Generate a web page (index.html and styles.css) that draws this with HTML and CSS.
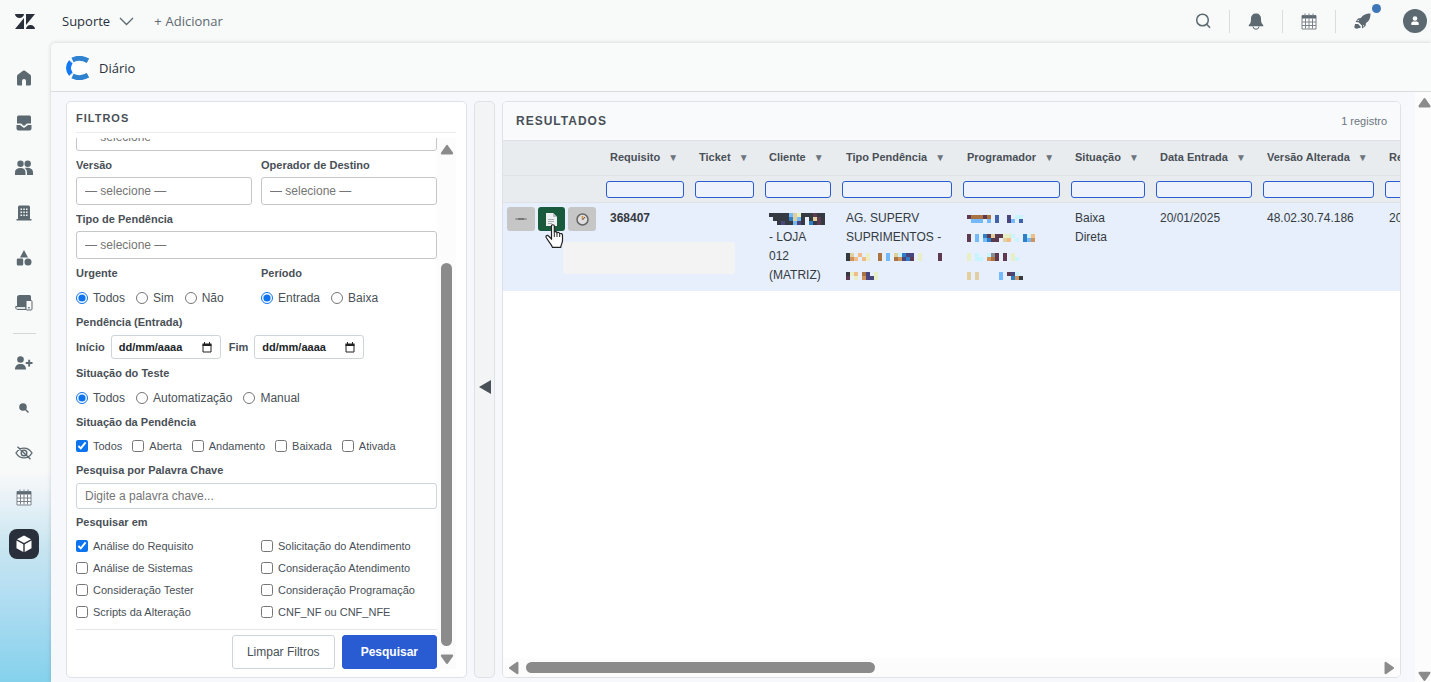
FILE: index.html
```html
<!DOCTYPE html>
<html lang="pt-BR">
  <head>
    <meta charset="UTF-8" />
    <title>Diário</title>
    <link rel="stylesheet" href="styles.css">
  </head>
  <body>
    <svg class="defs" width="0" height="0" aria-hidden="true">
      <symbol id="calendar" viewBox="0 0 16 16">
        <path d="M1 2h14v13.5H1z" fill="#fff" stroke="#7b828b" />
        <path d="M1 2h14v3H1z" fill="#5c6970" />
        <path d="M4 0v3M8 0v3M12 0v3" stroke="#7b828b" />
        <path d="M1 8.5h14M1 12h14M4.5 5v10M8 5v10M11.5 5v10" stroke="#7b828b" />
      </symbol>
      <symbol id="date" viewBox="0 0 10 11">
        <path d="M1 2.5h8v7.500H1z" fill="none" stroke="#222" />
        <path d="M.5 1.500h9V4h-9zM2 0h1v2H2zM7 0h1v2H7z" fill="#222" />
      </symbol>
    </svg>

    <header class="topbar">
      <a class="logo" href="#" aria-label="Início">
        <svg width="20" height="15" viewBox="0 0 20 15" fill="#2a303b">
          <path d="M0 0h9a4.500 4 0 0 1-9 0zM9 4v11H0zM11 0h9l-9 11zM11 15a4.500 4 0 0 1 9 0z" />
        </svg>
      </a>
      <button class="product">
        Suporte
        <svg width="15" height="9" viewBox="0 0 15 9" fill="none" stroke="#5c6970" stroke-width="1.300">
          <path d="M1 1l6.500 6.500L14 1" />
        </svg>
      </button>
      <button class="add"><span>+</span> Adicionar</button>

      <div class="tools">
        <button aria-label="Pesquisar no site">
          <svg width="16" height="16" viewBox="0 0 16 16" fill="none" stroke="#5c6970" stroke-width="1.500">
            <circle cx="7.500" cy="7" r="5.800" />
            <path d="M11.700 11.200l3.300 3.500" />
          </svg>
        </button>
        <button aria-label="Notificações">
          <svg width="16" height="17" viewBox="0 0 16 17" fill="#5c6970">
            <path d="M8 .5c3 0 5 2 5 5.300 0 3 .3 4.700 2.200 6.200v1.200H.8V12C2.700 10.500 3 8.800 3 5.800 3 2.500 5 .5 8 .5z" />
            <path d="M5 13.500a3 2.700 0 0 0 6 0" fill="none" stroke="#5c6970" />
          </svg>
        </button>
        <button aria-label="Calendário">
          <svg width="16" height="17"><use href="#calendar" /></svg>
        </button>
        <button class="rocket" aria-label="Novidades">
          <svg width="17" height="17" viewBox="0 0 17 17" fill="#5c6970">
            <path d="M16.500.5c-5 0-7.500 1.500-9.600 4.500L4 5.500 1.500 9l3 .2 3.400 3.400.2 3 3.400-2.500.5-3c3-2.100 4.500-4.600 4.500-9.600z" />
            <circle cx="2.800" cy="13.500" r="2.300" />
            <path d="M4 11l3 3-1 1H.5v1.500L1 11z" />
            <path d="M4.200 6.800L3.300 8h2zM9 13.700v-2l1.200 1z" fill="#f8f9f9" />
          </svg>
          <span class="dot"></span>
        </button>
        <button class="avatar" aria-label="Perfil">
          <svg width="24" height="24" viewBox="0 0 24 24">
            <circle cx="12" cy="12" r="12" fill="#5c6970" />
            <circle cx="12" cy="9.500" r="2.300" fill="#fff" />
            <path d="M8.300 16v-1.500a2 2 0 0 1 2-2h3.400a2 2 0 0 1 2 2V16z" fill="#fff" />
          </svg>
        </button>
      </div>
    </header>

    <div class="shell">
      <nav class="sidebar">
        <a href="#" aria-label="Home">
          <svg width="16" height="16" viewBox="0 0 16 16"><path d="M7 .7a2 2 0 0 1 2 0l5.300 4.100c.5.400.7.800.7 1.400V14a1.500 1.500 0 0 1-1.500 1.500H10V11a2 2 0 0 0-4 0v4.500H2.500A1.500 1.500 0 0 1 1 14V6.200c0-.6.2-1 .7-1.400z" /></svg>
        </a>
        <a href="#" aria-label="Visualizações">
          <svg width="16" height="16" viewBox="0 0 16 16"><path d="M2.500.5h11A1.500 1.500 0 0 1 15 2v6.500h-4L8 11 5 8.500H1V2A1.500 1.500 0 0 1 2.500.5zM.5 10H4l4 3 4-3h3.500v3.500a2 2 0 0 1-2 2h-11a2 2 0 0 1-2-2z" /></svg>
        </a>
        <a href="#" aria-label="Clientes">
          <svg width="18" height="16" viewBox="0 0 18 16"><circle cx="5.500" cy="3.700" r="3.200" /><circle cx="12.700" cy="3.700" r="3.200" /><path d="M0 15v-2.500C0 9.500 2 8 5.500 8s5 1.500 5 4.500V15zM9.500 8c5-.8 8.500.7 8.500 4.500V15h-6v-2.500c0-2-.8-3.500-2.500-4.500z" /></svg>
        </a>
        <a href="#" aria-label="Organizações">
          <svg width="16" height="16" viewBox="0 0 16 16"><path d="M3.500.5h9A1.500 1.500 0 0 1 14 2v12h1.500v1.500H.5V14H2V2A1.500 1.500 0 0 1 3.500.5z" /><path d="M4.500 3.500H6V5H4.500zM7.300 3.500h1.500V5H7.300zM10 3.500h1.500V5H10zM4.500 6.500H6V8H4.500zM7.300 6.500h1.500V8H7.300zM10 6.500h1.500V8H10zM4.500 9.500H6V11H4.500zM7.300 9.500h1.500V11H7.300zM10 9.500h1.500V11H10z" fill="#f8f9f9" /></svg>
        </a>
        <a href="#" aria-label="Objetos">
          <svg width="16" height="16" viewBox="0 0 16 16"><path d="M8 0l4 7.500H4zM2 8.500h4A1.200 1.200 0 0 1 7.200 9.700v4.600A1.200 1.200 0 0 1 6 15.500H2a1.200 1.200 0 0 1-1.200-1.200V9.700A1.200 1.200 0 0 1 2 8.500z" /><circle cx="12" cy="12" r="3.500" /></svg>
        </a>
        <a href="#" aria-label="Dispositivos">
          <svg width="18" height="16" viewBox="0 0 18 16"><path d="M4.500 0h10A1.500 1.500 0 0 1 16 1.500V13H2V2.500A2.500 2.500 0 0 1 4.500 0z" /><path d="M.7 11.500H11v3H2.500c-1.200 0-1.800-1-1.800-3z" fill="#dfe4e7" stroke="#5c6970" /><rect x="11" y="5.500" width="6" height="9.500" rx="1" fill="#f8f9f9" stroke="#5c6970" /><path d="M13.200 12h1.500v1.500h-1.500z" /></svg>
        </a>
        <hr />
        <a href="#" aria-label="Adicionar usuário">
          <svg width="18" height="14" viewBox="0 0 18 14"><circle cx="5.500" cy="3.500" r="3.300" /><path d="M0 13.500C0 10 2 8 5.500 8S11 10 11 13.500zM13.200 3.700h1.900v2.400h2.400V8h-2.400v2.400h-1.900V8h-2.400V6.100h2.400z" /></svg>
        </a>
        <a href="#" aria-label="Buscar">
          <svg width="10" height="10" viewBox="0 0 10 10"><circle cx="4" cy="4" r="3.800" /><path d="M6 6l3.500 3.500" stroke="#5c6970" stroke-width="1.500" /></svg>
        </a>
        <a href="#" aria-label="Ocultar">
          <svg width="18" height="14" viewBox="0 0 18 14" fill="none" stroke="#5c6970" stroke-width="1.400"><path d="M1 7c4-6.500 12-6.500 16 0-4 6.500-12 6.500-16 0zM2.500.7l13 12.600" /><circle cx="9" cy="7" r="2.800" /></svg>
        </a>
        <a href="#" aria-label="Agenda">
          <svg width="16" height="17"><use href="#calendar" /></svg>
        </a>
        <a class="active" href="#" aria-label="Diário">
          <svg width="16" height="18" viewBox="0 0 16 18"><path d="M8 .5l7 3.700-7 3.800-7-3.800zM.5 5.500L7.300 9.200V17L.5 13.300zM15.500 5.500L8.700 9.200V17l6.800-3.700z" fill="#fff" /></svg>
        </a>
      </nav>

      <main class="app">
        <div class="app-header">
          <svg width="24" height="24" viewBox="0 0 24 24" fill="none" stroke-width="5">
            <rect width="24" height="24" fill="#fff" />
            <path d="M6.500 4C11 1.700 17 2 22 4.700" stroke="#2f82cf" />
            <path d="M5 5.500c-3.300 4-3.300 9 0 13" stroke="#1278f3" />
            <path d="M6.500 20c4.500 2.300 10.500 2 15.500-.7" stroke="#2f82cf" />
            <path d="M3.500 4l4 4M3.500 20l4-4" stroke="#fff" stroke-width=".8" />
          </svg>
          <h1>Diário</h1>
        </div>

        <div class="workspace">
          <div class="panels">
            <form class="filters">
              <h2>FILTROS</h2>
              <div class="filters-body">
                <div class="fields">
                  <div class="field pick">
                    <select aria-label="Sistema"><option>— selecione —</option></select>
                  </div>
                  <div class="row">
                    <div class="field pick">
                      <label for="versao">Versão</label>
                      <select id="versao"><option>— selecione —</option></select>
                    </div>
                    <div class="field pick">
                      <label for="operador">Operador de Destino</label>
                      <select id="operador"><option>— selecione —</option></select>
                    </div>
                  </div>
                  <div class="field pick">
                    <label for="tipo">Tipo de Pendência</label>
                    <select id="tipo"><option>— selecione —</option></select>
                  </div>
                  <div class="row">
                    <fieldset class="field">
                      <legend>Urgente</legend>
                      <div class="radios">
                        <label><input type="radio" name="urgente" checked />Todos</label>
                        <label><input type="radio" name="urgente" />Sim</label>
                        <label><input type="radio" name="urgente" />Não</label>
                      </div>
                    </fieldset>
                    <fieldset class="field">
                      <legend>Período</legend>
                      <div class="radios">
                        <label><input type="radio" name="periodo" checked />Entrada</label>
                        <label><input type="radio" name="periodo" />Baixa</label>
                      </div>
                    </fieldset>
                  </div>
                  <fieldset class="field">
                    <legend>Pendência (Entrada)</legend>
                    <div class="dates">
                      <label for="inicio">Início</label>
                      <span class="date-box">
                        <input id="inicio" type="text" placeholder="dd/mm/aaaa" />
                        <svg width="10" height="11"><use href="#date" /></svg>
                      </span>
                      <label for="fim">Fim</label>
                      <span class="date-box">
                        <input id="fim" type="text" placeholder="dd/mm/aaaa" />
                        <svg width="10" height="11"><use href="#date" /></svg>
                      </span>
                    </div>
                  </fieldset>
                  <fieldset class="field">
                    <legend>Situação do Teste</legend>
                    <div class="radios">
                      <label><input type="radio" name="teste" checked />Todos</label>
                      <label><input type="radio" name="teste" />Automatização</label>
                      <label><input type="radio" name="teste" />Manual</label>
                    </div>
                  </fieldset>
                  <fieldset class="field">
                    <legend>Situação da Pendência</legend>
                    <div class="checks">
                      <label><input type="checkbox" checked />Todos</label>
                      <label><input type="checkbox" />Aberta</label>
                      <label><input type="checkbox" />Andamento</label>
                      <label><input type="checkbox" />Baixada</label>
                      <label><input type="checkbox" />Ativada</label>
                    </div>
                  </fieldset>
                  <div class="field">
                    <label for="palavra">Pesquisa por Palavra Chave</label>
                    <input class="text" id="palavra" type="text" placeholder="Digite a palavra chave..." />
                  </div>
                  <fieldset class="field">
                    <legend>Pesquisar em</legend>
                    <div class="check-grid">
                      <label><input type="checkbox" checked />Análise do Requisito</label>
                      <label><input type="checkbox" />Solicitação do Atendimento</label>
                      <label><input type="checkbox" />Análise de Sistemas</label>
                      <label><input type="checkbox" />Consideração Atendimento</label>
                      <label><input type="checkbox" />Consideração Tester</label>
                      <label><input type="checkbox" />Consideração Programação</label>
                      <label><input type="checkbox" />Scripts da Alteração</label>
                      <label><input type="checkbox" />CNF_NF ou CNF_NFE</label>
                    </div>
                  </fieldset>
                  <div class="actions">
                    <button type="reset" class="btn">Limpar Filtros</button>
                    <button type="button" class="btn primary">Pesquisar</button>
                  </div>
                </div>
                <div class="vscroll">
                  <svg width="14" height="11" viewBox="0 0 12 10"><path d="M5 1.500a1.200 1.200 0 0 1 2 0L11.500 8q.5 1.500-1 1.500h-9Q0 9.500.5 8z" /></svg>
                  <div class="rail"><div class="thumb"></div></div>
                  <svg width="14" height="11" viewBox="0 0 12 10"><path d="M5 8.500a1.200 1.200 0 0 0 2 0L11.500 2q.5-1.500-1-1.500h-9Q0 .5.5 2z" /></svg>
                </div>
              </div>
            </form>

            <button class="collapse" aria-label="Recolher filtros">
              <svg width="12" height="14" viewBox="0 0 12 14"><path d="M0 7l12-7v14z" fill="#495057" /></svg>
            </button>

            <section class="results">
              <div class="results-header">
                <h2>RESULTADOS</h2>
                <span>1 registro</span>
              </div>
              <div class="table-wrap">
                <table>
                  <colgroup>
                    <col class="c-actions" /><col class="c-requisito" /><col class="c-ticket" />
                    <col class="c-cliente" /><col class="c-tipo" /><col class="c-programador" />
                    <col class="c-situacao" /><col class="c-data" /><col class="c-versao" /><col class="c-release" />
                  </colgroup>
                  <thead>
                    <tr>
                      <th></th>
                      <th>Requisito <i>▼</i></th>
                      <th>Ticket <i>▼</i></th>
                      <th>Cliente <i>▼</i></th>
                      <th>Tipo Pendência <i>▼</i></th>
                      <th>Programador <i>▼</i></th>
                      <th>Situação <i>▼</i></th>
                      <th>Data Entrada <i>▼</i></th>
                      <th>Versão Alterada <i>▼</i></th>
                      <th>Release</th>
                    </tr>
                    <tr class="search">
                      <td></td>
                      <td><input type="text" aria-label="Requisito" /></td>
                      <td><input type="text" aria-label="Ticket" /></td>
                      <td><input type="text" aria-label="Cliente" /></td>
                      <td><input type="text" aria-label="Tipo Pendência" /></td>
                      <td><input type="text" aria-label="Programador" /></td>
                      <td><input type="text" aria-label="Situação" /></td>
                      <td><input type="text" aria-label="Data Entrada" /></td>
                      <td><input type="text" aria-label="Versão Alterada" /></td>
                      <td><input type="text" aria-label="Release" /></td>
                    </tr>
                  </thead>
                  <tbody>
                    <tr>
                      <td class="row-actions">
                        <div class="icon-buttons">
                          <button aria-label="Recolher">
                            <svg width="12" height="4" viewBox="0 0 12 4"><rect y="1" width="12" height="2" rx="1" fill="#999" /><rect x="3" y="1" width="6" height="2" fill="#777" /></svg>
                          </button>
                          <button class="on" aria-label="Documento">
                            <svg width="11" height="13" viewBox="0 0 11 13"><path d="M0 0h7l4 4v9H0z" fill="#eceef0" /><path d="M7 0v4h4z" fill="#b9bec2" /><path d="M2 6.500h6M2 8.500h6M2 10.500h4" stroke="#a9aeb3" /></svg>
                          </button>
                          <button aria-label="Tempo">
                            <svg width="13" height="13" viewBox="0 0 13 13"><circle cx="6.500" cy="6.500" r="5.500" fill="#dedede" stroke="#666" stroke-width="1.500" /><path d="M6.500 6.500V3" stroke="#e58a2b" stroke-width="1.500" /><path d="M6.500 7l2.500-3" stroke="#555" /></svg>
                          </button>
                        </div>
                        <div class="tooltip"></div>
                        <svg class="cursor" width="19" height="25" viewBox="0 0 19 25">
                          <path d="M6.500 2c0-1.700 2.800-1.700 2.800 0v6.500c.6-1.300 2.600-1 2.700.5.800-1 2.600-.6 2.700.9.900-.8 2.800-.4 2.800 1.500v5c0 3-1.500 4-1.800 7H7.500C6.500 20 3 17 1.200 13.500c-.8-1.700 1.200-2.900 2.400-1.500l2.900 3z" fill="#fff" stroke="#222" stroke-width="1.200" />
                          <path d="M9.300 8.500V13M12 9.500V13M14.700 10.500V13" stroke="#222" />
                        </svg>
                      </td>
                      <td><b>368407</b></td>
                      <td></td>
                      <td><span class="mosaic" data-rows="kkkkkbtykkkmkk .kkkkutbk.ktmk ..knkkbnk.ukmk"></span> - LOJA 012 (MATRIZ)</td>
                      <td>
                        AG. SUPERV SUPRIMENTOS -
                        <span class="mosaic" data-rows="kt.s.y..o.b.tcunn.y....m kws.sy..o.b.ownum.y....m"></span>
                        <span class="mosaic" data-rows="kys.on.y m.y.wnny"></span>
                      </td>
                      <td>
                        <span class="mosaic" data-rows="mooomo.a..n.cc .bbb.b.a..nb.a"></span>
                        <span class="mosaic" data-rows="m.b.umtmmyyc..ucs m.b.bumm.ts.c.ubw"></span>
                        <span class="mosaic" data-rows="y.c..cgm.m.y. y.cc.wom.m.yc"></span>
                        <span class="mosaic" data-rows="t.t.....b.mnc. t.t.....b..uwk"></span>
                      </td>
                      <td>Baixa Direta</td>
                      <td>20/01/2025</td>
                      <td>48.02.30.74.186</td>
                      <td>20/01/2025</td>
                    </tr>
                  </tbody>
                </table>
              </div>
              <div class="hscroll">
                <svg width="11" height="14" viewBox="0 0 10 12"><path d="M1.500 5a1.200 1.200 0 0 0 0 2L8 11.500q1.500.5 1.500-1v-9q0-1.500-1.500-1z" /></svg>
                <div class="rail"><div class="thumb"></div></div>
                <svg width="11" height="14" viewBox="0 0 10 12"><path d="M8.500 5a1.200 1.200 0 0 1 0 2L2 11.500q-1.500.5-1.500-1v-9q0-1.500 1.500-1z" /></svg>
              </div>
            </section>
          </div>
          <div class="page-scroll">
            <svg width="13" height="11" viewBox="0 0 12 10"><path d="M5 1.500a1.200 1.200 0 0 1 2 0L11.500 8q.5 1.500-1 1.500h-9Q0 9.500.5 8z" /></svg>
            <svg width="13" height="11" viewBox="0 0 12 10"><path d="M5 8.500a1.200 1.200 0 0 0 2 0L11.500 2q.5-1.500-1-1.500h-9Q0 .5.5 2z" /></svg>
          </div>
        </div>
      </main>
    </div>

    <script>
      const palette = {
        k: "#353a42", m: "#5e3a4e", b: "#74bafa", u: "#2f7fc8", n: "#48457f",
        o: "#a97442", y: "#e8efc4", t: "#e2cfa0", c: "#c8f4ff", s: "#f0bd88",
        g: "#8a8d92", a: "#3f63a8", w: "#d0955c",
      };

      // each letter becomes one square, hidden names are drawn as blocks
      document.querySelectorAll(".mosaic").forEach((el) => {
        const rows = el.dataset.rows.split(" ");
        let rects = "";
        rows.forEach((row, y) => {
          [...row].forEach((key, x) => {
            if (palette[key]) {
              rects += `<rect x="${x * 4}" y="${y * 4}" width="4" height="4" fill="${palette[key]}" />`;
            }
          });
        });
        el.innerHTML = `<svg width="${rows[0].length * 4}" height="${rows.length * 4}">${rects}</svg>`;
      });
    </script>
  </body>
</html>
```
FILE: styles.css
```css
* {
  box-sizing: border-box;
}

body {
  margin: 0;
  height: 100vh;
  display: flex;
  flex-direction: column;
  overflow: hidden;
  background: #f8f9f9;
  color: #343a40;
  font-family: "Liberation Sans", Arial, sans-serif;
  font-size: 12px;
}

button,
input,
select {
  font: inherit;
  color: inherit;
}

button {
  cursor: pointer;
}

svg {
  display: block;
  flex: none;
}

.defs {
  position: absolute;
}

h1,
h2 {
  margin: 0;
}

/* top bar */
.topbar {
  height: 43px;
  flex: none;
  display: flex;
  align-items: center;
  padding-bottom: 1px;
  font-family: "Open Sans", sans-serif;
  font-size: 13px;
}

.topbar button {
  display: flex;
  align-items: center;
  padding: 0;
  border: 0;
  background: none;
}

.logo {
  padding: 0 27px 0 15px;
}

.topbar .product {
  gap: 9px;
  margin-right: 20px;
  color: #2a303b;
  font-weight: 500;
}

.topbar .add {
  gap: 4px;
  color: #5c6970;
}

.tools {
  display: flex;
  align-items: center;
  margin-left: auto;
}

.tools button {
  justify-content: center;
  width: 53px;
  height: 23px;
  border-left: 1px solid #d8dcde;
}

.tools button:first-child,
.tools .avatar {
  border-left: 0;
}

.tools .rocket {
  position: relative;
}

.tools .avatar {
  justify-content: flex-end;
  width: 43px;
  padding-right: 4px;
}

.dot {
  position: absolute;
  top: -6px;
  right: 7px;
  width: 9px;
  height: 9px;
  border-radius: 50%;
  background: #3f76b8;
}

.shell {
  flex: 1;
  min-height: 0;
  display: flex;
}

/* side navigation */
.sidebar {
  width: 51px;
  flex: none;
  padding: 12px 3px 0 0;
  background: linear-gradient(#f8f9f9 67%, #e6f1f7 72%, #c8e5f0 79%, #b4def2 86%, #85d1ec 100%);
}

.sidebar a {
  height: 45px;
  display: flex;
  align-items: center;
  justify-content: center;
  fill: #5c6970;
}

.sidebar hr {
  width: 23px;
  margin: 8px auto 6px;
  border: 0;
  border-top: 1px solid #d3d7da;
}

.sidebar .active {
  width: 30px;
  height: 30px;
  margin: 9px auto;
  border-radius: 8px;
  background: #2a303b;
}

/* app */
.app {
  flex: 1;
  min-width: 0;
  display: flex;
  flex-direction: column;
  border-top-left-radius: 5px;
  background: #f7f8fb;
  box-shadow: 0 0 4px rgba(40, 50, 60, 0.2);
}

.app-header {
  height: 49px;
  flex: none;
  display: flex;
  align-items: center;
  gap: 9px;
  padding: 2px 0 0 15px;
  border-bottom: 1px solid #d8dcde;
  border-top-left-radius: 5px;
  background: #f9fafa;
}

.app-header h1 {
  color: #2a303b;
  font-family: "Open Sans", sans-serif;
  font-size: 13px;
  font-weight: 400;
}

.workspace {
  flex: 1;
  min-height: 0;
  display: flex;
}

.panels {
  flex: 1;
  min-width: 0;
  display: flex;
  gap: 7px;
  padding: 9px 14px 4px 15px;
}

.filters,
.collapse,
.results {
  border: 1px solid #dee2e6;
  border-radius: 5px;
}

/* filters */
.filters {
  width: 401px;
  flex: none;
  display: flex;
  flex-direction: column;
  padding: 0 10px 8px 9px;
  background: #fff;
  color: #495057;
}

.filters h2 {
  height: 31px;
  flex: none;
  border-bottom: 1px solid #e9ecef;
  font-size: 11px;
  letter-spacing: 1px;
  line-height: 33px;
}

.filters-body {
  flex: 1;
  min-height: 0;
  display: flex;
  margin-top: 5px;
}

/* the list is scrolled to its end */
.fields {
  flex: 1;
  display: flex;
  flex-direction: column;
  justify-content: flex-end;
  overflow: hidden;
}

.row {
  display: grid;
  grid-template-columns: 1fr 1fr;
  gap: 9px;
}

.field {
  min-width: 0;
  margin: 0 0 6px;
  padding: 0;
  border: 0;
}

.field > label,
.field > legend {
  display: block;
  padding: 0;
  margin-bottom: 6px;
  font-size: 11px;
  font-weight: bold;
  line-height: 14px;
}

.pick {
  margin-bottom: 7px;
}

.pick > label {
  margin-bottom: 5px;
}

.field select,
.text {
  display: block;
  width: 100%;
  height: 28px;
  padding: 0 8px;
  border: 1px solid #ced4da;
  border-radius: 3px;
  background: #fff;
  color: #757575;
  appearance: none;
}

.field select {
  border-color: #c4c6c8;
}

.text {
  height: 26px;
}

.text::placeholder {
  color: #757575;
}

.radios,
.checks {
  display: flex;
  gap: 11px;
  padding: 4px 0;
  line-height: 14px;
}

.radios {
  padding-top: 5px;
}

.checks,
.check-grid {
  font-size: 11px;
}

.checks {
  gap: 10px;
}

.radios label,
.checks label,
.check-grid label {
  display: flex;
  align-items: center;
  gap: 5px;
}

.radios input,
.checks input,
.check-grid input {
  width: 12px;
  height: 12px;
  margin: 0;
  accent-color: #0d73ee;
}

.check-grid {
  display: grid;
  grid-template-columns: 1fr 1fr;
  column-gap: 9px;
  line-height: 22px;
}

.dates {
  display: flex;
  align-items: center;
  padding-bottom: 1px;
  font-size: 11px;
  font-weight: bold;
}

.date-box {
  display: flex;
  align-items: center;
  width: 110px;
  height: 24px;
  margin: 0 8px 0 6px;
  padding: 0 8px 0 7px;
  border: 1px solid #ced4da;
  border-radius: 3px;
}

.date-box input {
  flex: 1;
  min-width: 0;
  padding: 0;
  border: 0;
}

.date-box input::placeholder {
  color: #212529;
}

.actions {
  display: flex;
  justify-content: flex-end;
  gap: 7px;
  padding-top: 5px;
  border-top: 1px solid #e3e6e9;
}

.btn {
  height: 34px;
  padding: 0 14px;
  border: 1px solid #ced4da;
  border-radius: 3px;
  background: #fff;
}

.primary {
  padding: 0 18px;
  border-color: #295bd3;
  background: #295bd3;
  color: #fff;
  font-weight: bold;
}

/* scrollbars */
.vscroll,
.hscroll,
.page-scroll {
  display: flex;
  align-items: center;
  fill: #8b8b8b;
  background: #fcfcfc;
}

.vscroll {
  width: 19px;
  flex-direction: column;
  padding: 6px 0 4px;
}

.rail {
  flex: 1;
  display: flex;
}

.thumb {
  border-radius: 6px;
  background: #8b8b8b;
}

.vscroll .rail {
  align-items: flex-end;
  padding-bottom: 8px;
}

.vscroll .thumb {
  width: 11px;
  height: 78%;
}

.hscroll {
  height: 19px;
  padding: 0 5px;
}

.hscroll .rail {
  padding: 0 7px;
}

.hscroll .thumb {
  width: 41%;
  height: 11px;
}

.page-scroll {
  width: 16px;
  flex-direction: column;
  align-items: flex-end;
  justify-content: space-between;
  padding-top: 5px;
}

.collapse {
  width: 21px;
  flex: none;
  display: flex;
  align-items: center;
  justify-content: center;
  padding: 0 0 5px;
  background: #f3f4f6;
}

/* results */
.results {
  flex: 1;
  min-width: 0;
  display: flex;
  flex-direction: column;
  overflow: hidden;
  background: #fff;
}

.results-header {
  height: 39px;
  flex: none;
  display: flex;
  align-items: center;
  justify-content: space-between;
  padding: 0 13px;
  border-bottom: 1px solid #dee2e6;
  background: #f8fafc;
}

.results-header h2 {
  color: #495057;
  font-size: 12px;
  letter-spacing: 1px;
}

.results-header span {
  color: #6c757d;
  font-size: 11px;
}

.table-wrap {
  flex: 1;
  min-height: 0;
  overflow: hidden;
}

table {
  width: 986px;
  table-layout: fixed;
  border-collapse: separate;
  border-spacing: 0;
}

.c-actions { width: 97px; }
.c-requisito { width: 89px; }
.c-ticket { width: 70px; }
.c-cliente { width: 77px; }
.c-tipo { width: 121px; }
.c-programador { width: 108px; }
.c-situacao { width: 85px; }
.c-data { width: 107px; }
.c-versao { width: 122px; }
.c-release { width: 110px; }

th,
.search td {
  border-bottom: 1px solid #dee2e6;
  background: #e9ecef;
}

th {
  height: 35px;
  padding: 0 0 2px 10px;
  color: #495057;
  font-size: 11px;
  text-align: left;
  white-space: nowrap;
}

th i {
  margin-left: 5px;
  color: #6c757d;
  font-size: 10px;
  font-style: normal;
}

.search td {
  height: 27px;
  padding: 0 5px 0 6px;
}

.search input {
  display: block;
  width: 100%;
  height: 17px;
  border: 1px solid #295bd3;
  border-radius: 3px;
  background: #edf2fd;
}

tbody td {
  padding: 6px 10px;
  background: #e7effd;
  line-height: 19px;
  vertical-align: top;
}

.mosaic {
  display: flex;
  align-items: center;
  height: 19px;
  margin-right: -10px;
}

tbody .row-actions {
  position: relative;
  padding: 4px;
}

.icon-buttons {
  display: flex;
  gap: 3px;
}

.icon-buttons button {
  width: 28px;
  height: 24px;
  display: flex;
  align-items: center;
  justify-content: center;
  padding: 0;
  border: 0;
  border-radius: 3px;
  background: #c6c6c6;
}

.icon-buttons .on {
  background: #195a3c;
}

.tooltip {
  position: absolute;
  left: 60px;
  top: 39px;
  width: 172px;
  height: 32px;
  border-radius: 2px;
  background: #f3f3f3;
}

.cursor {
  position: absolute;
  left: 42px;
  top: 21px;
}
```
